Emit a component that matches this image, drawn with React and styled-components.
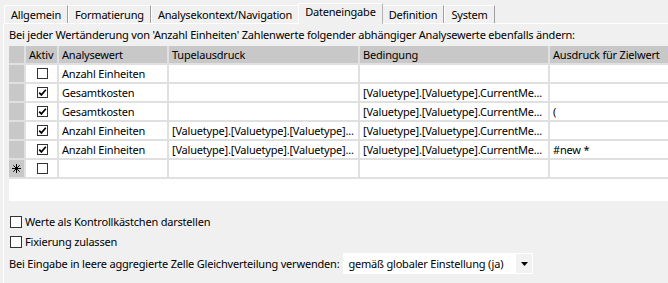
import React from 'react'
import styled, { createGlobalStyle } from 'styled-components'

const GlobalStyle = createGlobalStyle`
  body {
    margin: 0;
    background: #f0f0f0;
    font-family: "Noto Sans", "Open Sans", sans-serif;
    font-size: 11px;
    letter-spacing: -0.2px;
    color: #000;
    overflow: hidden;
  }
`

const gridLine = '#e0e0e0'
const headerGray = '#c8c8c8'

const Window = styled.div`
  width: 668px;
  height: 283px;
  padding: 5px 0 0 3px;
  box-sizing: border-box;
  overflow: hidden;
`

const TabStrip = styled.div`
  display: flex;
  align-items: flex-end;
  height: 18px;
  padding-left: 1px;
`

const Tab = styled.div`
  position: relative;
  height: ${p => (p.$active ? '21px' : '18px')};
  margin: ${p => (p.$active ? '0 -1px -1px -1px' : '0')};
  padding: ${p => (p.$active ? '0 6px' : '0 6px')};
  box-sizing: border-box;
  line-height: ${p => (p.$active ? '16px' : '17px')};
  border-top: 1px solid #ffffff;
  border-left: 1px solid #ffffff;
  border-right: 1px solid ${p => (p.$active ? '#b4b4b4' : '#a0a0a0')};
  background: #f0f0f0;
  z-index: ${p => (p.$active ? 1 : 0)};
  white-space: nowrap;
`

const Panel = styled.div`
  border-top: 1px solid #ffffff;
  border-left: 1px solid #ffffff;
  padding: 3px 0 0 5px;
  height: 260px;
`

const Intro = styled.div`
  line-height: 15px;
  white-space: nowrap;
`

const GridBox = styled.div`
  margin-top: 4px;
  height: 155px;
  width: 700px;
  background: #ffffff;
`

const Table = styled.div`
  display: grid;
  grid-template-columns: 15px 31px 108px 189px 188px 160px;
  grid-auto-rows: 17px;
  gap: 2px;
  padding-bottom: 2px;
  background: ${gridLine};
`

const HeaderCell = styled.div`
  background: ${headerGray};
  padding-left: 3px;
  line-height: 17px;
  white-space: nowrap;
  overflow: hidden;
`

const RowHead = styled.div`
  background: ${headerGray};
  display: flex;
  align-items: center;
  justify-content: center;
`

const Cell = styled.div`
  background: #ffffff;
  padding-left: 3px;
  line-height: 17px;
  white-space: nowrap;
  overflow: hidden;
`

const CheckCell = styled.div`
  background: #ffffff;
  display: flex;
  align-items: center;
  justify-content: center;
  padding-left: 1px;
`

const Box = styled.span`
  display: inline-flex;
  align-items: center;
  justify-content: center;
  width: ${p => p.$size}px;
  height: ${p => p.$size}px;
  box-sizing: border-box;
  border: 1px solid #333333;
  background: #ffffff;
  flex-shrink: 0;
`

const Options = styled.div`
  margin-top: 13px;
  display: flex;
  flex-direction: column;
  gap: 5px;
`

const OptionRow = styled.label`
  display: flex;
  align-items: center;
  gap: 3px;
  height: 15px;
  padding-left: 1px;
  white-space: nowrap;
`

const SelectRow = styled.div`
  display: flex;
  align-items: center;
  gap: 4px;
  height: 21px;
  margin-top: 4px;
  white-space: nowrap;
`

const Select = styled.div`
  display: flex;
  width: 190px;
  height: 21px;
  box-sizing: border-box;
  padding: 1px;
  background: #ffffff;
`

const SelectValue = styled.div`
  flex: 1;
  padding-left: 4px;
  line-height: 19px;
`

const SelectArrow = styled.div`
  width: 16px;
  background: #f2f2f2;
  display: flex;
  align-items: center;
  justify-content: center;
`

const Checkbox = ({ checked, size = 11 }) => (
  <Box $size={size}>
    {checked && (
      <svg width="9" height="9" viewBox="0 0 9 9">
        <path d="M1.2 4.6 L3.4 6.9 L7.8 1.8" fill="none" stroke="#000" strokeWidth="1.7" />
      </svg>
    )}
  </Box>
)

const NewRowMark = () => (
  <svg width="9" height="9" viewBox="0 0 9 9">
    <g stroke="#000" strokeWidth="1">
      <line x1="4.5" y1="0" x2="4.5" y2="9" />
      <line x1="0" y1="4.5" x2="9" y2="4.5" />
      <line x1="1.3" y1="1.3" x2="7.7" y2="7.7" />
      <line x1="7.7" y1="1.3" x2="1.3" y2="7.7" />
    </g>
  </svg>
)

const tabs = ['Allgemein', 'Formatierung', 'Analysekontext/Navigation', 'Dateneingabe', 'Definition', 'System']

const columns = ['Aktiv', 'Analysewert', 'Tupelausdruck', 'Bedingung', 'Ausdruck für Zielwert']

const tuple = '[Valuetype].[Valuetype].[Valuetype]...'
const cond = '[Valuetype].[Valuetype].CurrentMe...'

const rows = [
  { active: false, value: 'Anzahl Einheiten', tuple: '', cond: '', expr: '' },
  { active: true, value: 'Gesamtkosten', tuple: '', cond, expr: '' },
  { active: true, value: 'Gesamtkosten', tuple: '', cond, expr: '(' },
  { active: true, value: 'Anzahl Einheiten', tuple, cond, expr: '' },
  { active: true, value: 'Anzahl Einheiten', tuple, cond, expr: '#new *' },
]

export default function App() {
  return (
    <Window>
      <GlobalStyle />
      <TabStrip>
        {tabs.map(t => (
          <Tab key={t} $active={t === 'Dateneingabe'}>{t}</Tab>
        ))}
      </TabStrip>
      <Panel>
        <Intro>
          Bei jeder Wertänderung von 'Anzahl Einheiten' Zahlenwerte folgender abhängiger Analysewerte ebenfalls ändern:
        </Intro>
        <GridBox>
          <Table>
            <RowHead />
            {columns.map(c => (
              <HeaderCell key={c}>{c}</HeaderCell>
            ))}
            {rows.map((r, i) => (
              <React.Fragment key={i}>
                <RowHead />
                <CheckCell><Checkbox checked={r.active} /></CheckCell>
                <Cell>{r.value}</Cell>
                <Cell>{r.tuple}</Cell>
                <Cell>{r.cond}</Cell>
                <Cell>{r.expr}</Cell>
              </React.Fragment>
            ))}
            <RowHead><NewRowMark /></RowHead>
            <CheckCell><Checkbox /></CheckCell>
            <Cell />
            <Cell />
            <Cell />
            <Cell />
          </Table>
        </GridBox>
        <Options>
          <OptionRow>
            <Checkbox size={12} />
            Werte als Kontrollkästchen darstellen
          </OptionRow>
          <OptionRow>
            <Checkbox size={12} />
            Fixierung zulassen
          </OptionRow>
        </Options>
        <SelectRow>
          Bei Eingabe in leere aggregierte Zelle Gleichverteilung verwenden:
          <Select>
            <SelectValue>gemäß globaler Einstellung (ja)</SelectValue>
            <SelectArrow>
              <svg width="7" height="4" viewBox="0 0 7 4">
                <path d="M0 0 H7 L3.5 4 Z" fill="#000" />
              </svg>
            </SelectArrow>
          </Select>
        </SelectRow>
      </Panel>
    </Window>
  )
}
